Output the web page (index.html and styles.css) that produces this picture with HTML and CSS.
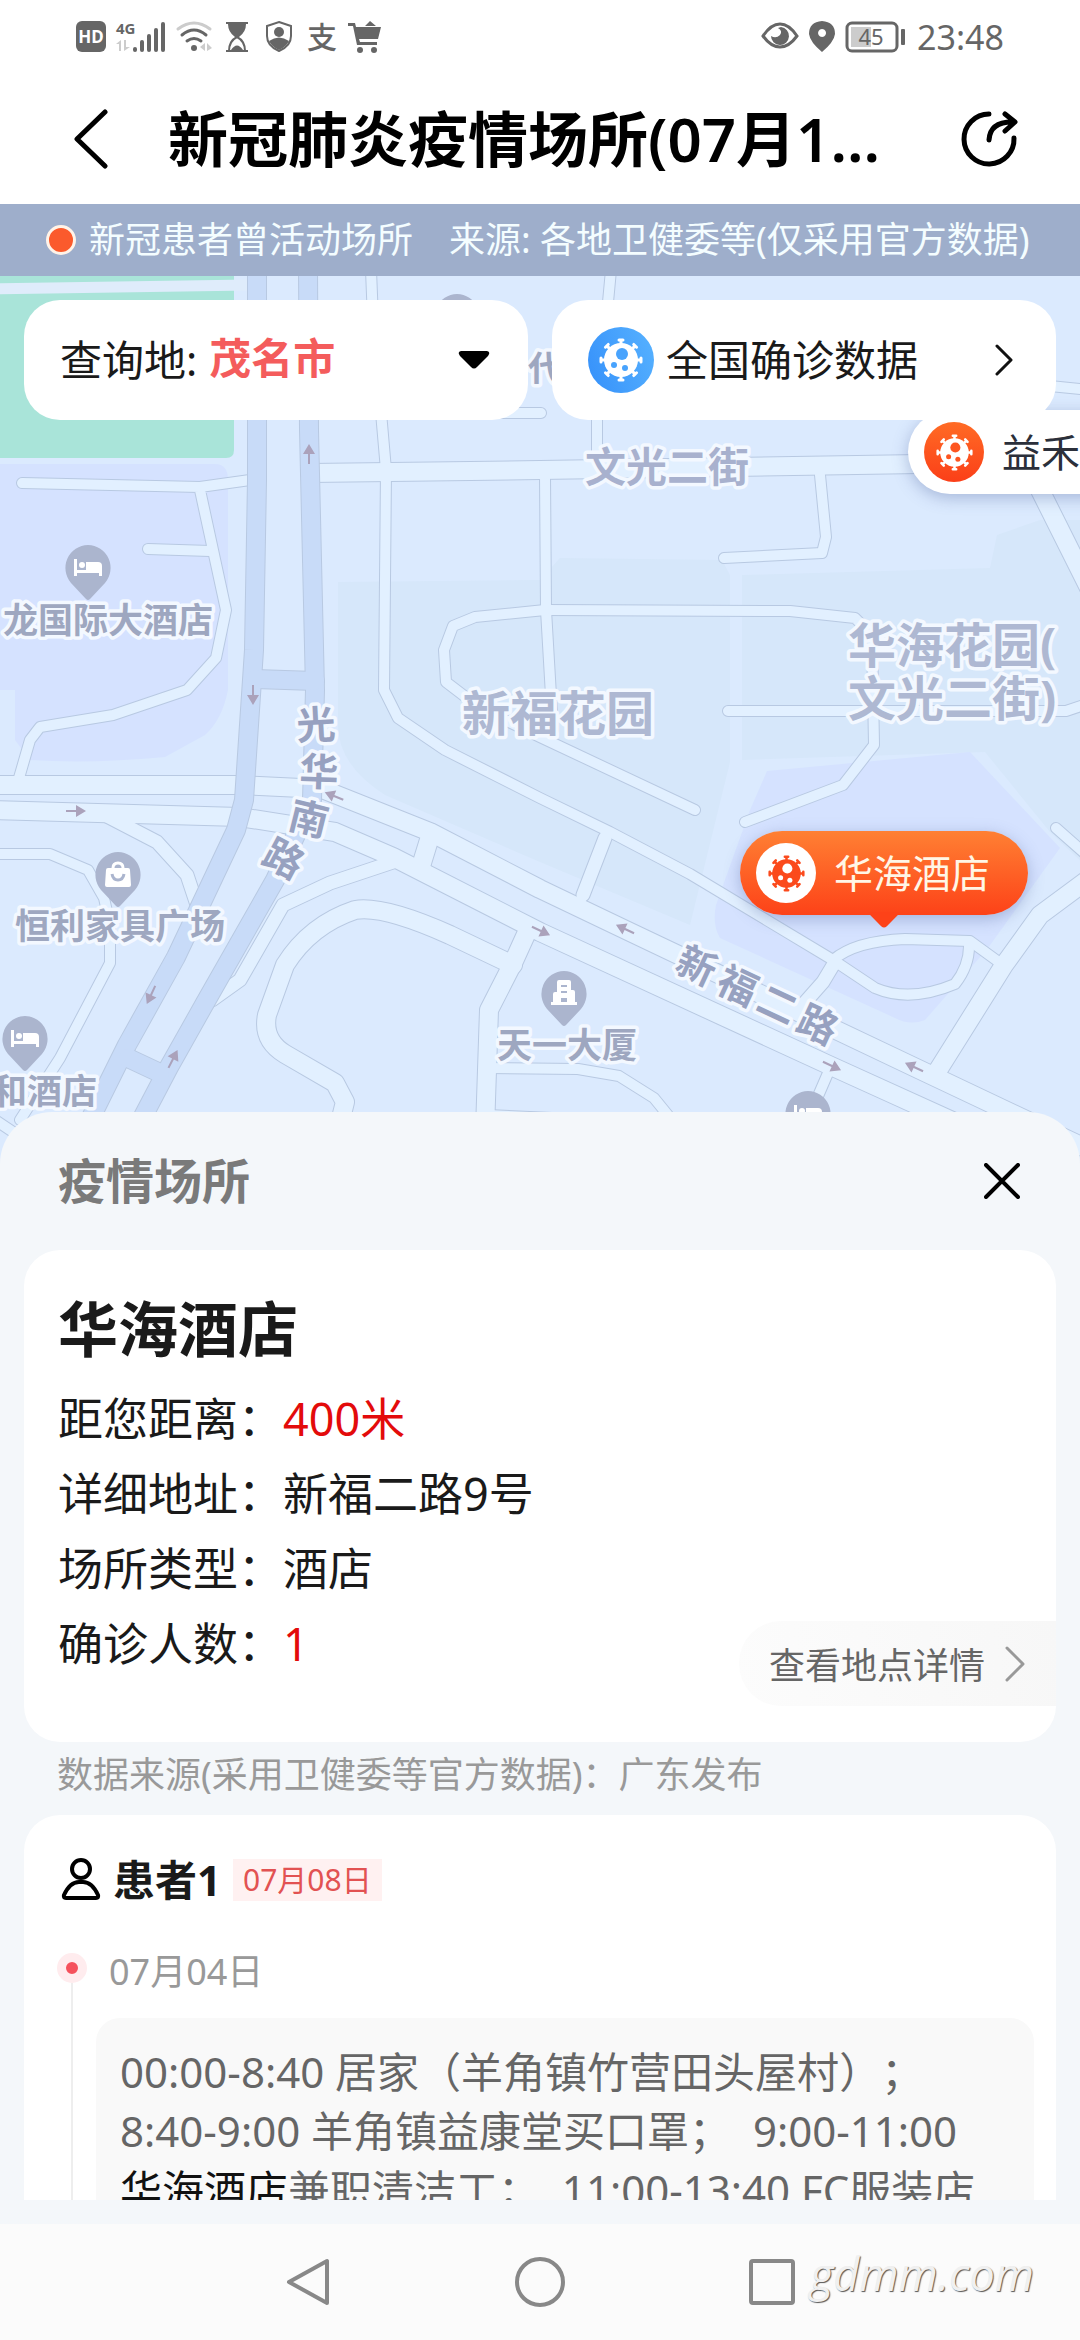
FILE: index.html
```html
<!DOCTYPE html>
<html lang="zh-CN">
<head>
    <meta charset="UTF-8">
    <meta name="viewport" content="width=device-width, initial-scale=1.0">
    <title>新冠肺炎疫情场所</title>
    <link rel="stylesheet" href="styles.css">
</head>
<body>
    <!-- 共用图标 -->
    <svg class="defs" aria-hidden="true">
        <symbol id="virus" viewBox="-22 -22 44 44">
            <g fill="currentColor" stroke="currentColor">
                <circle r="17" stroke="none"/>
                <g stroke-width="3" stroke-linecap="round">
                    <path d="M0-20V20M-2-20H2M-2 20H2M-20 0H20M-20-2V2M20-2V2"/>
                    <path transform="rotate(45)" d="M0-20V20M-2-20H2M-2 20H2M-20 0H20M-20-2V2M20-2V2"/>
                </g>
            </g>
            <g class="virus-hole">
                <circle cx="1" cy="-6" r="6"/>
                <circle cx="-7" cy="5" r="3"/>
                <circle cx="4" cy="8" r="3"/>
            </g>
        </symbol>
        <symbol id="pin" viewBox="-24 -24 48 58" overflow="visible">
            <path d="M0-23A23 23 0 0 1 17 15L2 31Q0 33-2 31L-17 15A23 23 0 0 1 0-23Z"/>
        </symbol>
        <g id="bed" fill="#fff">
            <path d="M-14-9h3V4h-3zM-11 2h25v6h-3V5h-22v3h-3V0z"/>
            <path d="M-2-6H10Q14-6 14-2V4H-2z"/>
            <circle cx="-6" cy="-3" r="3"/>
        </g>
        <path id="arrow" d="M-10-1H0V-6L10 0L0 6V1H-10Z"/>
    </svg>

    <div class="app">
        <div class="status-bar">
            <div class="status-group">
                <svg width="30" height="32" viewBox="0 0 30 32"><rect width="30" height="31" rx="6" fill="#666"/><text x="15" y="22" text-anchor="middle" font-size="17" font-weight="700" fill="#fff">HD</text></svg>
                <svg width="50" height="32" viewBox="0 0 50 32" fill="#666"><text x="0" y="13" font-size="15" font-weight="700">4G</text><path fill="#ccc" d="M0 23L5 19V30H3V23zM8 19H10V26H14L8 30z"/><rect x="17" y="26" width="4" height="5" rx="2"/><rect x="24" y="19" width="4" height="12" rx="2"/><rect x="31" y="13" width="4" height="18" rx="2"/><rect x="38" y="7" width="4" height="24" rx="2"/><rect x="45" y="1" width="4" height="30" rx="2"/></svg>
                <svg width="36" height="32" viewBox="0 0 36 32" fill="none" stroke-width="3" stroke-linecap="round"><path stroke="#ccc" d="M2 8Q18-4 34 8"/><path stroke="#666" d="M6 14Q18 4 30 14M11 20Q18 15 25 20"/><circle cx="18" cy="27" r="3" fill="#666"/><path fill="#ccc" d="M24 26l5-4v8zM36 27l-5-5v8z"/></svg>
                <svg width="30" height="32" viewBox="0 0 30 32"><path fill="#666" d="M4 1H26V3H24Q24 11 17 16H13Q6 11 6 3H4zM4 29H26V31H4z"/><path d="M7 30Q7 20 15 16Q23 20 23 30" fill="none" stroke="#666" stroke-width="2"/><path fill="#666" d="M9 29Q15 20 21 29z"/></svg>
                <svg width="34" height="32" viewBox="0 0 34 32"><path d="M17 1L29 5V15Q29 25 17 30Q5 25 5 15V5Z" fill="none" stroke="#666" stroke-width="2"/><circle cx="17" cy="11" r="5" fill="#666"/><path fill="#666" d="M7 20Q17 13 27 20Q24 26 17 29Q10 26 7 20z"/></svg>
                <svg width="32" height="32" viewBox="0 0 32 32"><text x="16" y="27" text-anchor="middle" font-size="30" font-weight="500" fill="#666">支</text></svg>
                <svg width="34" height="32" viewBox="0 0 34 32" fill="#666"><path d="M0 2H7L8 6H33L30 18H11L12 21H29V24H9L5 5H0zM17 5L22 0L28 5z"/><circle cx="12" cy="29" r="3"/><circle cx="26" cy="29" r="3"/></svg>
            </div>
            <div class="status-group">
                <svg width="38" height="32" viewBox="0 0 38 32"><path d="M2 15Q10 3 19 3Q28 3 36 15Q28 26 19 26Q10 26 2 15Z" fill="none" stroke="#666" stroke-width="3"/><path fill="#666" d="M20 6A9 9 0 1 1 10 15Q15 18 19 14Q22 10 17 7z"/></svg>
                <svg width="26" height="32" viewBox="0 0 26 32"><path fill="#666" fill-rule="evenodd" d="M13 0Q26 1 26 13Q25 21 13 31Q1 21 0 13Q0 1 13 0zM13 8a4 4 0 1 0 .1 0z"/></svg>
                <svg width="62" height="32" viewBox="0 0 62 32"><rect x="2" y="2" width="50" height="28" rx="5" fill="none" stroke="#666" stroke-width="3"/><rect x="6" y="6" width="20" height="20" fill="#ccc"/><text x="26" y="24" text-anchor="middle" font-size="22" fill="#666">45</text><rect x="56" y="8" width="4" height="16" rx="1" fill="#666"/></svg>
                <time class="clock">23:48</time>
            </div>
        </div>

        <header class="app-bar">
            <button class="icon-button" type="button" aria-label="返回">
                <svg width="36" height="60" viewBox="0 0 36 60" fill="none" stroke="#000" stroke-width="5" stroke-linecap="round" stroke-linejoin="round"><path d="M31 3L3 30L31 57"/></svg>
            </button>
            <h1 class="app-title">新冠肺炎疫情场所(07月1...</h1>
            <button class="icon-button" type="button" aria-label="分享">
                <svg width="58" height="58" viewBox="0 0 58 58" fill="none" stroke="#000" stroke-width="5" stroke-linecap="round" stroke-linejoin="round"><path d="M29 4A25 25 0 1 0 54 28"/><path d="M29 30Q30 12 52 12M45 4L55 12L45 21"/></svg>
            </button>
        </header>

        <main class="map-area">
            <svg class="map" viewBox="0 204 1080 960" preserveAspectRatio="xMidYMin slice" role="img" aria-label="地图">
                <defs>
                    <g id="lanes-small">
                        <path d="M22 483L200 487L250 480M200 490L226 610L216 658L187 690L113 715L40 727L30 740L19 778M148 549L210 551"/>
                        <path d="M371 270L373 320L386 470L384 690L398 718L445 750L540 798L610 832L690 874L833 960L875 988Q910 1003 955 984Q970 965 969 943"/>
                        <path d="M611 270L597 420V475M545 475L546 610L553 730M820 475L826 537L822 553L724 558"/>
                        <path d="M545 610L790 611L855 618L872 635L874 745L843 785L745 822"/>
                        <path d="M545 610L475 617L453 626L444 650L446 682L480 708L540 737L695 810M728 711H1066L1090 703M490 413H541M1040 385L1090 390"/>
                        <path d="M833 960Q855 941 905 939L970 941L1003 965M1056 828L1090 858"/>
                        <path d="M0 854H50L88 870L104 898L110 925V963L60 1058L20 1120"/>
                        <path d="M487 1068L578 1069L619 1076L654 1098L680 1130M828 1073L812 1110M-5 1120L40 1150M487 1115L640 1122"/>
                    </g>
                    <g id="lanes-medium">
                        <path d="M105 815L157 842L187 875L197 905M393 862L330 883L283 905L240 980L212 1000M605 838L583 895M835 962L823 982L800 1008"/>
                    </g>
                    <g id="lanes-large">
                        <path d="M310 473L540 470L920 464M1040 490L1090 590M1090 878L1040 915L1004 965L935 1075"/>
                        <path d="M-10 785H240L322 789L430 832L540 889L630 932L914 1067L1100 1155"/>
                        <path d="M-10 810L240 817L335 832L393 857L540 932L831 1066L1100 1188"/>
                        <path d="M429 840L421 866M528 930L513 963L489 1010L485 1130"/>
                        <path d="M513 965L450 935Q383 905 355 910Q310 925 285 965L267 1015Q262 1040 285 1054L335 1083L345 1102L338 1130"/>
                    </g>
                    <g id="highways">
                        <path d="M257 270L257 480L254 650L244 800L236 830L176 957L127 1045L65 1170"/>
                        <path d="M308 270L309 430L315 690L312 800L275 880L205 1003L169 1067L115 1170"/>
                        <path d="M255 679L315 681M128 1058L160 1073"/>
                    </g>
                </defs>

                <rect class="land" x="-600" y="204" width="2280" height="1200"/>
                <path class="park" d="M-10 204H234V450Q234 458 226 458H-10Z"/>
                <path d="M-10 289L250 285" stroke="#dfecfb" stroke-width="11"/>
                <path class="plot-violet" d="M-10 464H215Q228 464 228 480V690Q222 720 205 735L165 757Q90 764 30 760L15 740V690H-10Z"/>
                <path class="plot-teal" d="M338 582L540 580L560 558L722 560L730 575V762L690 925L540 862L385 795Q338 765 338 725Z"/>
                <path class="plot-teal" d="M742 575L990 568L997 535L1040 520H1090V870L1050 832L985 752L742 760Z"/>
                <path class="plot-violet" d="M767 771L970 752L1060 848L988 948L925 1020Q910 1026 895 1018L720 938Q712 925 716 905L750 810Z"/>

                <use href="#lanes-small" class="lane-edge" stroke-width="12"/>
                <use href="#lanes-medium" class="lane-edge" stroke-width="15"/>
                <use href="#lanes-large" class="lane-edge" stroke-width="20"/>
                <use href="#lanes-small" class="lane" stroke-width="10"/>
                <use href="#lanes-medium" class="lane" stroke-width="13"/>
                <use href="#lanes-large" class="lane" stroke-width="18"/>
                <use href="#highways" class="lane-edge" stroke-width="20"/>
                <use href="#highways" class="highway" stroke-width="18"/>

                <g fill="#aba2bb">
                    <use href="#arrow" transform="translate(309 454) rotate(-90)"/>
                    <use href="#arrow" transform="translate(253 695) rotate(90)"/>
                    <use href="#arrow" transform="translate(76 811)"/>
                    <use href="#arrow" transform="translate(334 796) rotate(202)"/>
                    <use href="#arrow" transform="translate(151 995) rotate(115)"/>
                    <use href="#arrow" transform="translate(173 1059) rotate(-63)"/>
                    <use href="#arrow" transform="translate(541 931) rotate(25)"/>
                    <use href="#arrow" transform="translate(625 929) rotate(205)"/>
                    <use href="#arrow" transform="translate(832 1066) rotate(25)"/>
                    <use href="#arrow" transform="translate(914 1067) rotate(205)"/>
                </g>

                <g class="map-pins">
                    <g transform="translate(88 568)"><use href="#pin" x="-24" y="-24" width="48" height="58"/><use href="#bed"/></g>
                    <g transform="translate(25 1039)"><use href="#pin" x="-24" y="-24" width="48" height="58"/><use href="#bed"/></g>
                    <g transform="translate(808 1114)"><use href="#pin" x="-24" y="-24" width="48" height="58"/><use href="#bed"/></g>
                    <g transform="translate(457 317)"><use href="#pin" x="-24" y="-24" width="48" height="58"/></g>
                    <g transform="translate(118 875)"><use href="#pin" x="-24" y="-24" width="48" height="58"/><path fill="#fff" d="M-10-7H10Q12-7 12-5L13 10Q13 12 11 12H-11Q-13 12-13 10L-12-5Q-12-7-10-7z"/><path d="M-5-7Q-5-12 0-12Q5-12 5-7" fill="none" stroke="#fff" stroke-width="3"/><path d="M-6-1Q-5 5 0 5Q5 5 6-1" fill="none" stroke="#abb5ce" stroke-width="3"/></g>
                    <g transform="translate(564 994)"><use href="#pin" x="-24" y="-24" width="48" height="58"/><path fill="#fff" fill-rule="evenodd" d="M-5-14H5Q7-14 7-12V-4H9Q11-4 11-2V8H13V11H-13V8H-11V0Q-11-2-9-2H-7V-12Q-7-14-5-14zM-3-9V-7H3V-9zM-3-3V-1H3V-3zM-3 4V8H3V4z"/></g>
                </g>

                <g class="map-labels">
                    <text x="528" y="381" class="poi">代</text>
                    <text x="3" y="633" class="poi">龙国际大酒店</text>
                    <text x="15" y="939" class="poi">恒利家具广场</text>
                    <text x="-8" y="1104" class="poi">和酒店</text>
                    <text x="497" y="1058" class="poi">天一大厦</text>
                    <text x="585" y="482" class="street">文光二街</text>
                    <text x="462" y="731" class="estate">新福花园</text>
                    <text x="848" y="663" class="estate">华海花园(</text>
                    <text x="848" y="716" class="estate">文光二街)</text>
                    <g class="road-name">
                        <text transform="translate(316 724) rotate(-3)" y="15">光</text>
                        <text transform="translate(319 771) rotate(2)" y="15">华</text>
                        <text transform="translate(309 818) rotate(14)" y="15">南</text>
                        <text transform="translate(284 858) rotate(28)" y="15">路</text>
                        <text transform="translate(697 965) rotate(25)" y="15">新</text>
                        <text transform="translate(738 985) rotate(25)" y="15">福</text>
                        <text transform="translate(778 1004) rotate(25)" y="15">二</text>
                        <text transform="translate(818 1024) rotate(25)" y="15">路</text>
                    </g>
                </g>
            </svg>

            <button class="marker marker-plain" type="button"><span class="marker-icon"><svg width="37" height="37"><use href="#virus"/></svg></span><span class="bar-text">益禾堂</span></button>
            <button class="marker marker-active" type="button"><span class="marker-icon"><svg width="37" height="37"><use href="#virus"/></svg></span><span class="bar-text">华海酒店</span></button>

            <div class="notice">
                <span class="legend-dot"></span>
                <span class="bar-text">新冠患者曾活动场所</span>
                <span class="bar-text notice-source">来源: 各地卫健委等(仅采用官方数据)</span>
            </div>

            <div class="filters">
                <div class="filter">
                    <label class="bar-text" for="city">查询地:</label>
                    <select id="city" class="bar-text city-select">
                        <option>茂名市</option>
                    </select>
                    <svg class="caret" width="32" height="18" viewBox="0 0 32 18"><path d="M3 0H29Q33 1 30 5L19 16Q16 19 13 16L2 5Q-1 1 3 0Z"/></svg>
                </div>
                <a class="filter" href="#">
                    <span class="virus-badge"><svg width="44" height="44"><use href="#virus"/></svg></span>
                    <span class="bar-text">全国确诊数据</span>
                    <svg class="filter-arrow" width="20" height="32" viewBox="0 0 20 32" fill="none" stroke="#111" stroke-width="3" stroke-linecap="round" stroke-linejoin="round"><path d="M3 2L17 16L3 30"/></svg>
                </a>
            </div>
        </main>

        <section class="sheet">
            <div class="sheet-header">
                <h2 class="sheet-title">疫情场所</h2>
                <button class="icon-button" type="button" aria-label="关闭">
                    <svg width="36" height="36" viewBox="0 0 36 36" stroke="#000" stroke-width="4" stroke-linecap="round"><path d="M2 2L34 34M34 2L2 34"/></svg>
                </button>
            </div>

            <div class="sheet-body">
                <article class="card place">
                    <h3 class="place-name">华海酒店</h3>
                    <div class="place-row">
                        <dl class="place-info">
                            <dt>距您距离：</dt><dd class="hot">400米</dd>
                            <dt>详细地址：</dt><dd>新福二路9号</dd>
                            <dt>场所类型：</dt><dd>酒店</dd>
                            <dt>确诊人数：</dt><dd class="hot">1</dd>
                        </dl>
                        <a class="detail-link" href="#">查看地点详情
                            <svg width="20" height="36" viewBox="0 0 20 36" fill="none" stroke="#999" stroke-width="3" stroke-linecap="round" stroke-linejoin="round"><path d="M2 2L18 18L2 34"/></svg>
                        </a>
                    </div>
                </article>

                <p class="source">数据来源(采用卫健委等官方数据)：广东发布</p>

                <article class="card patient">
                    <div class="patient-header">
                        <svg width="40" height="44" viewBox="0 0 40 44" fill="none" stroke="#000" stroke-width="4" stroke-linejoin="round"><circle cx="20" cy="11" r="9"/><path d="M3 37Q9 24 18 24H22Q31 24 37 37Q38 40 35 40H5Q2 40 3 37Z"/></svg>
                        <h3 class="patient-name">患者1</h3>
                        <span class="patient-date">07月08日</span>
                    </div>
                    <div class="timeline">
                        <div class="rail"><span class="rail-dot"></span></div>
                        <div class="entry">
                            <time class="entry-date">07月04日</time>
                            <p class="entry-text">00:00-8:40 居家（羊角镇竹营田头屋村）；<br>8:40-9:00 羊角镇益康堂买口罩；&nbsp; 9:00-11:00<br><strong>华海酒店</strong>兼职清洁工；&nbsp; 11:00-13:40 FC服装店</p>
                        </div>
                    </div>
                </article>
            </div>
        </section>

        <nav class="system-nav">
            <button class="icon-button" type="button" aria-label="后退"><svg width="46" height="48" viewBox="0 0 46 48" fill="none" stroke="#888" stroke-width="4" stroke-linejoin="round"><path d="M42 3V45L4 24Z"/></svg></button>
            <button class="icon-button" type="button" aria-label="主屏幕"><svg width="50" height="50" viewBox="0 0 50 50" fill="none" stroke="#888" stroke-width="4"><circle cx="25" cy="25" r="23"/></svg></button>
            <button class="icon-button" type="button" aria-label="最近任务"><svg width="46" height="46" viewBox="0 0 46 46" fill="none" stroke="#888" stroke-width="4"><rect x="2" y="2" width="42" height="42" rx="2"/></svg></button>
            <span class="watermark">gdmm.com</span>
        </nav>
    </div>
</body>
</html>
```
FILE: styles.css
```css
* {
    box-sizing: border-box;
}

body {
    margin: 0;
    font-family: "Noto Sans", "Noto Sans CJK SC", sans-serif;
    text-spacing-trim: space-all;
    color: #1a1a1a;
    background: #fff;
}

h1, h2, h3, p, dl, dd {
    margin: 0;
}

button, select {
    font: inherit;
    color: inherit;
    border: none;
    background: none;
    padding: 0;
}

a {
    color: inherit;
    text-decoration: none;
}

svg {
    display: block;
    flex: none;
}

.defs {
    position: absolute;
    width: 0;
    height: 0;
}

.virus-hole {
    fill: var(--hole);
}

.app {
    display: flex;
    flex-direction: column;
    height: 100vh;
    overflow: hidden;
}

.icon-button {
    flex: none;
}

/* 深色条和卡片里的文字，略微上移以对齐图标 */
.bar-text {
    padding-bottom: 5px;
}

/* 状态栏 */
.status-bar {
    display: flex;
    justify-content: space-between;
    align-items: center;
    height: 74px;
    padding: 0 76px;
    flex: none;
}

.status-group {
    display: flex;
    align-items: center;
    gap: 10px;
}

.status-group svg {
    overflow: visible;
}

.clock {
    font-size: 34px;
    line-height: 40px;
    color: #666;
}

/* 标题栏 */
.app-bar {
    display: flex;
    align-items: center;
    justify-content: space-between;
    height: 130px;
    padding: 0 62px 0 74px;
    flex: none;
}

.app-title {
    flex: 1;
    margin-left: 58px;
    font-size: 60px;
    line-height: 80px;
    font-weight: 600;
    color: #000;
    white-space: nowrap;
}

/* 地图 */
.map-area {
    position: relative;
    height: 960px;
    flex: none;
    overflow: hidden;
}

.map {
    position: absolute;
    width: 100%;
    height: 100%;
}

.land { fill: #dbeafe; }
.park { fill: #a9e4d9; }
.plot-violet { fill: #d5e2ff; }
.plot-teal { fill: #d6e7fa; }

.lane-edge, .lane, .highway {
    fill: none;
    stroke-linecap: round;
    stroke-linejoin: round;
}

.lane-edge { stroke: #b8c9e2; }
.lane { stroke: #e2f0ff; }
.highway { stroke: #c8dbf8; }

.map-pins { fill: #abb5ce; }

.map-labels {
    font-weight: 700;
    stroke: #f3f8ff;
    stroke-width: 7px;
    stroke-linejoin: round;
    paint-order: stroke;
}

.poi {
    font-size: 35px;
    fill: #9ea7c0;
}

.street {
    font-size: 41px;
    fill: #a8b1ce;
}

.estate {
    font-size: 48px;
    fill: #aeb8d2;
}

.road-name {
    font-size: 39px;
    fill: #97a1c0;
    text-anchor: middle;
}

.notice {
    position: relative;
    display: flex;
    align-items: center;
    height: 72px;
    padding-left: 46px;
    font-size: 36px;
    white-space: nowrap;
    color: #f4fdff;
    background: #9eaecb;
}

.legend-dot {
    width: 30px;
    height: 30px;
    margin-right: 13px;
    border: 3px solid #fff3e8;
    border-radius: 50%;
    background: #fb5a2c;
}

.notice-source {
    margin-left: 36px;
}

.filters {
    position: relative;
    display: grid;
    grid-template-columns: 1fr 1fr;
    gap: 24px;
    padding: 24px;
}

.filter {
    display: flex;
    align-items: center;
    height: 120px;
    padding: 0 36px;
    border-radius: 36px;
    font-size: 42px;
    background: #fff;
}

.city-select {
    flex: 1;
    margin-left: 12px;
    appearance: none;
    font-weight: 700;
    color: #f45c5c;
}

.caret {
    margin-right: 2px;
}

.virus-badge {
    display: flex;
    align-items: center;
    justify-content: center;
    width: 66px;
    height: 66px;
    margin-right: 12px;
    border-radius: 50%;
    color: #fff;
    background: linear-gradient(70deg, #3590fa, #57b2ff);
    --hole: #48a3fd;
}

.filter-arrow {
    margin-left: auto;
    margin-right: 6px;
}

/* 地图上的标记点 */
.marker {
    position: absolute;
    display: flex;
    align-items: center;
    height: 84px;
    padding: 0 38px 0 16px;
    border-radius: 42px;
    font-size: 39px;
    white-space: nowrap;
    box-shadow: 0 4px 16px rgba(70, 90, 150, 0.35);
}

.marker-icon {
    display: flex;
    align-items: center;
    justify-content: center;
    width: 60px;
    height: 60px;
    margin-right: 18px;
    border-radius: 50%;
}

.marker-plain {
    left: 908px;
    top: 206px;
    color: #2b2f3a;
    background: #fff;
}

.marker-plain .marker-icon {
    color: #fff;
    background: linear-gradient(#ff6b25, #fb3f18);
    --hole: #fd5520;
}

.marker-active {
    left: 740px;
    top: 627px;
    color: #fff6e6;
    background: linear-gradient(#ff8033, #fd4218);
}

.marker-active::after {
    content: "";
    position: absolute;
    left: 132px;
    bottom: -9px;
    width: 24px;
    height: 24px;
    border-radius: 4px;
    background: linear-gradient(135deg, transparent 50%, #fd4218 50%);
    transform: rotate(45deg);
}

.marker-active .marker-icon {
    color: #fb4a1c;
    background: #fff;
    --hole: #fff;
}

/* 底部面板 */
.sheet {
    position: relative;
    display: flex;
    flex-direction: column;
    flex: 1;
    min-height: 0;
    margin-top: -52px;
    padding: 0 24px 24px;
    border-radius: 52px 52px 0 0;
    background: #f4f7fa;
}

.sheet-header {
    display: flex;
    align-items: center;
    justify-content: space-between;
    height: 138px;
    padding: 0 36px 0 34px;
    flex: none;
}

.sheet-title {
    font-size: 48px;
    line-height: 60px;
    font-weight: 600;
    color: #7a7a7a;
}

.sheet-body {
    flex: 1;
    min-height: 0;
    overflow: hidden;
}

.card {
    border-radius: 36px;
    background: #fff;
}

.place {
    padding: 39px 0 36px 34px;
}

.place-name {
    margin-bottom: 12px;
    font-size: 60px;
    line-height: 80px;
    font-weight: 700;
}

.place-row {
    display: flex;
    align-items: flex-end;
    justify-content: space-between;
}

.place-info {
    display: grid;
    grid-template-columns: auto 1fr;
    margin-bottom: 25px;
    font-size: 45px;
    line-height: 75px;
}

.hot {
    color: #e30b0b;
}

.detail-link {
    display: flex;
    align-items: center;
    gap: 20px;
    height: 85px;
    padding: 0 31px 0 30px;
    border-radius: 42px 0 0 42px;
    font-size: 36px;
    color: #666;
    background: linear-gradient(80deg, #fcfcfc, #f7f7f7);
}

.source {
    padding: 0 33px 8px;
    font-size: 36px;
    line-height: 65px;
    color: #999;
}

.patient {
    padding: 35px 22px 36px 32px;
}

.patient-header {
    display: flex;
    align-items: center;
    height: 60px;
    padding-left: 5px;
}

.patient-name {
    margin: 0 12px;
    font-size: 42px;
    line-height: 60px;
    font-weight: 700;
}

.patient-date {
    padding: 0 10px;
    font-size: 30px;
    line-height: 42px;
    color: #e25252;
    background: #fff1f1;
}

.timeline {
    display: flex;
    gap: 8px;
    padding-top: 36px;
}

.rail {
    display: flex;
    flex-direction: column;
    align-items: center;
    width: 32px;
    padding-top: 7px;
    flex: none;
}

.rail::after {
    content: "";
    flex: 1;
    width: 2px;
    background: #eee;
}

.rail-dot {
    width: 30px;
    height: 30px;
    border: 9px solid #ffecee;
    border-radius: 50%;
    background: #f5515c;
}

.entry {
    flex: 1;
}

.entry-date {
    display: block;
    margin: 0 0 20px 13px;
    font-size: 36px;
    line-height: 52px;
    color: #999;
}

.entry-text {
    padding: 24px;
    border-radius: 24px;
    font-size: 42px;
    line-height: 59px;
    color: #666;
    background: #f9f9f9;
}

.entry-text strong {
    font-weight: 400;
    color: #111;
}

/* 系统导航 */
.system-nav {
    position: relative;
    display: flex;
    align-items: center;
    justify-content: center;
    gap: 184px;
    height: 116px;
    flex: none;
    background: #fbfbfb;
}

.watermark {
    position: absolute;
    right: 46px;
    top: 20px;
    font-family: "Open Sans", sans-serif;
    font-style: italic;
    font-size: 45px;
    line-height: 60px;
    color: #f0f0f0;
    text-shadow: 1px 1px 1px #555;
}
```
